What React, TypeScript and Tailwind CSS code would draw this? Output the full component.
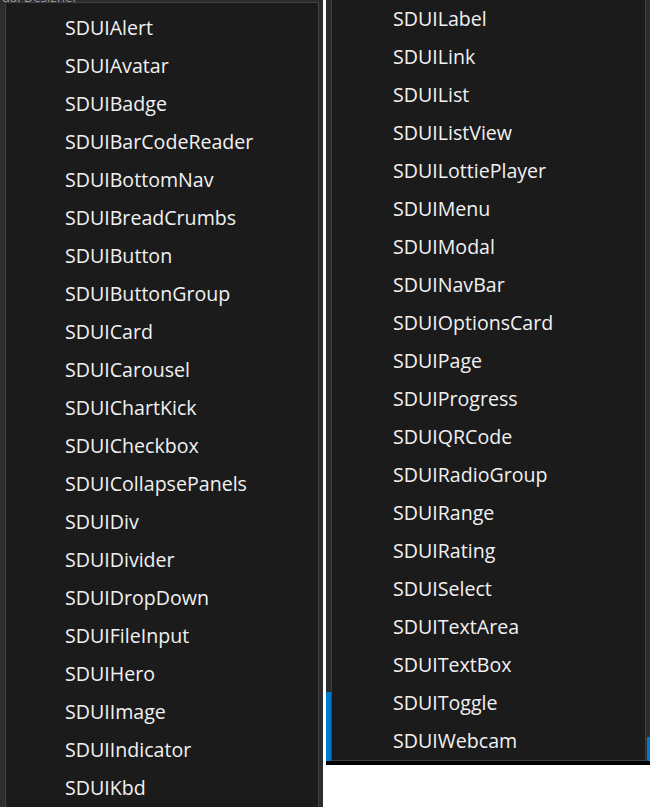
const leftItems = [
  "SDUIAlert",
  "SDUIAvatar",
  "SDUIBadge",
  "SDUIBarCodeReader",
  "SDUIBottomNav",
  "SDUIBreadCrumbs",
  "SDUIButton",
  "SDUIButtonGroup",
  "SDUICard",
  "SDUICarousel",
  "SDUIChartKick",
  "SDUICheckbox",
  "SDUICollapsePanels",
  "SDUIDiv",
  "SDUIDivider",
  "SDUIDropDown",
  "SDUIFileInput",
  "SDUIHero",
  "SDUIImage",
  "SDUIIndicator",
  "SDUIKbd",
];

const rightItems = [
  "SDUILabel",
  "SDUILink",
  "SDUIList",
  "SDUIListView",
  "SDUILottiePlayer",
  "SDUIMenu",
  "SDUIModal",
  "SDUINavBar",
  "SDUIOptionsCard",
  "SDUIPage",
  "SDUIProgress",
  "SDUIQRCode",
  "SDUIRadioGroup",
  "SDUIRange",
  "SDUIRating",
  "SDUISelect",
  "SDUITextArea",
  "SDUITextBox",
  "SDUIToggle",
  "SDUIWebcam",
];

function MenuItem({ label }: { label: string }) {
  return (
    <div className="h-[38px] flex items-center pl-[59px] text-[19.6px] text-[#f1f1f1] whitespace-nowrap select-none">
      {label}
    </div>
  );
}

export default function App() {
  return (
    <div
      className="w-[650px] h-[807px] bg-white flex overflow-hidden"
      style={{ fontFamily: '"Open Sans", "Noto Sans", sans-serif' }}
    >
      {/* left capture: toolbox dropdown over the designer */}
      <div className="w-[323px] h-full bg-[#2d2d30] flex flex-col shrink-0">
        <div className="h-[5px] overflow-hidden pl-[2px] text-[13px] leading-[13px] text-[#9a9a9a]">
          <div className="-mt-[9px]">ual Designer</div>
        </div>
        <div className="flex-1 flex pl-[5px] pr-[4px]">
          <div className="flex-1 bg-[#1b1b1c] border-t border-l border-r border-[#3f3f46] pt-[6px] overflow-hidden">
            {leftItems.map((e) => (
              <MenuItem key={e} label={e} />
            ))}
          </div>
        </div>
      </div>

      {/* divider between the two captures */}
      <div className="w-[3px] h-full bg-white shrink-0" />

      {/* right capture */}
      <div className="w-[324px] h-full flex flex-col shrink-0">
        <div className="h-[761px] flex bg-[#2d2d30]">
          <div className="w-[5px] flex flex-col">
            <div className="flex-1" />
            <div className="h-[69px] bg-[#007acc]" />
          </div>
          <div className="w-[315px] bg-[#1b1b1c] border-l border-r border-b border-[#3f3f46] overflow-hidden">
            <div className="pl-[2px]">
              {rightItems.map((e) => (
                <MenuItem key={e} label={e} />
              ))}
            </div>
          </div>
          <div className="w-[4px] flex flex-col">
            <div className="flex-1" />
            <div className="h-[24px] w-[3px] ml-px bg-[#007acc]" />
          </div>
        </div>
        <div className="h-[4px] bg-black" />
        <div className="flex-1 bg-white" />
      </div>
    </div>
  );
}
